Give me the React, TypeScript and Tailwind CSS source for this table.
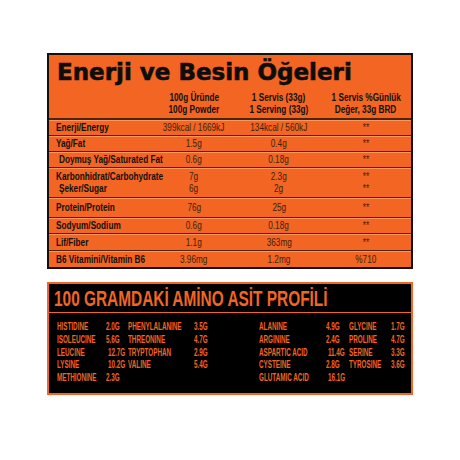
const sans = "font-['Liberation_Sans',Arial,sans-serif]";

interface Row {
  label: string[];
  v100: string[];
  vServ: string[];
  pct: string[];
  h: string;
  indent?: boolean[];
}

const rows: Row[] = [
  { label: ["Enerji/Energy"], v100: ["399kcal / 1669kJ"], vServ: ["134kcal / 560kJ"], pct: ["**"], h: "h-[14px]" },
  { label: ["Yağ/Fat"], v100: ["1.5g"], vServ: ["0.4g"], pct: ["**"], h: "h-[14px]" },
  { label: ["Doymuş Yağ/Saturated Fat"], v100: ["0.6g"], vServ: ["0.18g"], pct: ["**"], h: "h-[14px]", indent: [true] },
  {
    label: ["Karbonhidrat/Carbohydrate", "Şeker/Sugar"],
    v100: ["7g", "6g"],
    vServ: ["2.3g", "2g"],
    pct: ["**", "**"],
    h: "h-[28px]",
    indent: [false, true],
  },
  { label: ["Protein/Protein"], v100: ["76g"], vServ: ["25g"], pct: ["**"], h: "h-[18px]" },
  { label: ["Sodyum/Sodium"], v100: ["0.6g"], vServ: ["0.18g"], pct: ["**"], h: "h-[14px]" },
  { label: ["Lif/Fiber"], v100: ["1.1g"], vServ: ["363mg"], pct: ["**"], h: "h-[15px]" },
  { label: ["B6 Vitamini/Vitamin B6"], v100: ["3.96mg"], vServ: ["1.2mg"], pct: ["%710"], h: "h-[15px]" },
];

const amino: string[][] = [
  ["HISTIDINE", "2.0G", "PHENYLALANINE", "3.5G", "ALANINE", "4.9G", "GLYCINE", "1.7G"],
  ["ISOLEUCINE", "5.6G", "THREONINE", "4.7G", "ARGININE", "2.4G", "PROLINE", "4.7G"],
  ["LEUCINE", "12.7G", "TRYPTOPHAN", "2.9G", "ASPARTIC ACID", "11.4G", "SERINE", "3.3G"],
  ["LYSINE", "10.2G", "VALINE", "5.4G", "CYSTEINE", "2.8G", "TYROSINE", "3.6G"],
  ["METHIONINE", "2.3G", "", "", "GLUTAMIC ACID", "16.1G", "", ""],
];

// dar (condensed) görünüm için yatay sıkıştırma
const Narrow = ({ children, align = "left" }: { children: React.ReactNode; align?: "left" | "center" | "right" }) => (
  <span
    className={`inline-block whitespace-nowrap scale-x-[0.82] ${
      align === "left" ? "origin-left" : align === "right" ? "origin-right" : "origin-center"
    }`}
  >
    {children}
  </span>
);

const Amino = ({ children, right }: { children: React.ReactNode; right?: boolean }) => (
  <span className={`inline-block whitespace-nowrap scale-x-[0.63] ${right ? "origin-right" : "origin-left"}`}>
    {children}
  </span>
);

const Separator = ({ thick }: { thick?: boolean }) => (
  <div>
    <div className={`${thick ? "h-[2px]" : "h-px"} bg-[#4f230c]`} />
    <div className="h-px bg-[#f7965e]" />
  </div>
);

export default function App() {
  return (
    <div className="w-[460px] h-[460px] bg-white pt-[53px]">
      {/* Besin tablosu */}
      <div className={`mx-auto w-[366px] border-2 border-[#111] bg-[#f26522] text-[#1a1208] ${sans}`}>
        <div className="h-[34px] pl-[8px] font-['DejaVu_Sans',sans-serif] font-bold text-[23px] leading-[34px] text-[#0d0d0d] [-webkit-text-stroke:0.6px_#0d0d0d]">
          Enerji ve Besin Öğeleri
        </div>
        <div className="h-[29px] pt-[3px] grid grid-cols-[102px_86px_84px_90px] text-[10px] leading-[12px] font-bold text-center text-[#111]">
          <div />
          <div>
            <Narrow align="center">100g Üründe</Narrow>
            <br />
            <Narrow align="center">100g Powder</Narrow>
          </div>
          <div>
            <Narrow align="center">1 Servis (33g)</Narrow>
            <br />
            <Narrow align="center">1 Serving (33g)</Narrow>
          </div>
          <div>
            <Narrow align="center">1 Servis %Günlük</Narrow>
            <br />
            <Narrow align="center">Değer, 33g BRD</Narrow>
          </div>
        </div>
        <Separator thick />
        {rows.map((r, i) => (
          <div key={i}>
            <div className={`${r.h} grid grid-cols-[102px_86px_84px_90px] content-center text-[10px] leading-[12px]`}>
              <div className="pl-[7px] font-bold text-[#111]">
                {r.label.map((l, j) => (
                  <div key={j} className={r.indent?.[j] ? "pl-[3px]" : ""}>
                    <Narrow>{l}</Narrow>
                  </div>
                ))}
              </div>
              {[r.v100, r.vServ, r.pct].map((col, k) => (
                <div key={k} className="text-center text-[#3a2210]">
                  {col.map((v, j) => (
                    <div key={j}>
                      <Narrow align="center">{v}</Narrow>
                    </div>
                  ))}
                </div>
              ))}
            </div>
            {i < rows.length - 1 && <Separator />}
          </div>
        ))}
      </div>

      {/* Amino asit profili */}
      <div className={`mx-auto mt-[13px] w-[366px] border-2 border-[#f26522] bg-black text-[#f26522] ${sans}`}>
        <div className="h-[28px] pl-[5px] font-bold text-[22px] leading-[30px]">
          <span className="inline-block whitespace-nowrap origin-left scale-x-[0.7]">100 GRAMDAKİ AMİNO ASİT PROFİLİ</span>
        </div>
        <div className="h-px bg-[#f26522]" />
        <div className="pt-[8px] pb-[8px] pl-[8px] font-bold text-[10px] leading-[12.8px]">
          {amino.map((a, i) => (
            <div key={i} className="flex">
              <span className="w-[41px]"><Amino>{a[0]}</Amino></span>
              <span className="w-[20px] text-right"><Amino right>{a[1]}</Amino></span>
              <span className="ml-[10px] w-[58px]"><Amino>{a[2]}</Amino></span>
              <span className="w-[20px] text-right"><Amino right>{a[3]}</Amino></span>
              <span className="ml-[53px] w-[59px]"><Amino>{a[4]}</Amino></span>
              <span className="w-[20px] text-right"><Amino right>{a[5]}</Amino></span>
              <span className="ml-[11px] w-[34px]"><Amino>{a[6]}</Amino></span>
              <span className="w-[18px] text-right"><Amino right>{a[7]}</Amino></span>
            </div>
          ))}
        </div>
      </div>
    </div>
  );
}
